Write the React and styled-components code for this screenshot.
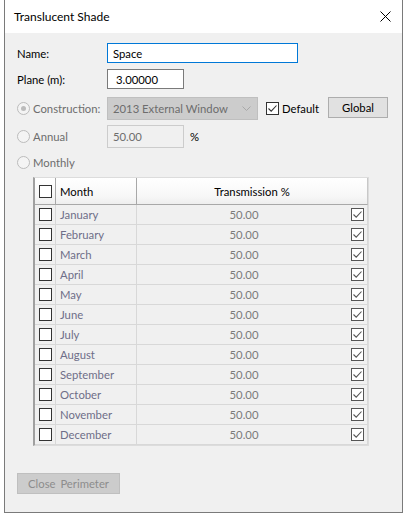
import React from 'react';
import styled, { createGlobalStyle } from 'styled-components';

const GlobalStyle = createGlobalStyle`
    body {
        margin: 0;
        background: #fff;
        font-family: Lato, "Noto Sans", sans-serif;
        font-size: 11.3px;
        color: #000;
    }
`;

const Window = styled.div`
    box-sizing: border-box;
    width: 399px;
    height: 513px;
    margin-left: 4px;
    border: 1px solid #7a7a7a;
    border-top: none;
    background: #f0f0f0;
    display: flex;
    flex-direction: column;
`;

const TitleBar = styled.div`
    height: 33px;
    flex: none;
    background: #fff;
    display: flex;
    align-items: center;
    justify-content: space-between;
    padding: 0 11px 0 9px;
    font-size: 12px;
`;

const Body = styled.div`
    padding: 10px 0 0 12px;
    display: flex;
    flex-direction: column;
`;

const Row = styled.div`
    display: flex;
    align-items: center;
    height: ${p => p.h || 20}px;
    margin-top: ${p => p.mt || 0}px;
`;

const Label = styled.div`
    width: 90px;
    flex: none;
    display: flex;
    align-items: center;
    color: ${p => (p.disabled ? '#6d6d6d' : '#000')};
`;

const TextBox = styled.div`
    box-sizing: border-box;
    width: ${p => p.w}px;
    height: ${p => p.h || 20}px;
    border: 1px solid ${p => p.border || '#7a7a7a'};
    background: ${p => p.bg || '#fff'};
    color: ${p => p.color || '#000'};
    padding-left: ${p => p.pl || 5}px;
    display: flex;
    align-items: center;
`;

const Select = styled(TextBox)`
    justify-content: space-between;
    padding-right: 6px;
`;

const Radio = styled.span`
    box-sizing: border-box;
    width: 13px;
    height: 13px;
    border-radius: 50%;
    border: 1px solid #bcbcbc;
    background: #f4f4f4;
    margin-right: 3px;
    display: flex;
    align-items: center;
    justify-content: center;
    &::after {
        content: '';
        width: 5px;
        height: 5px;
        border-radius: 50%;
        background: ${p => (p.checked ? '#bcbcbc' : 'transparent')};
    }
`;

const Box = styled.span`
    box-sizing: border-box;
    width: 13px;
    height: 13px;
    flex: none;
    border: 1px solid ${p => p.border || '#333'};
    background: #fff;
    display: flex;
    align-items: center;
    justify-content: center;
    margin-right: ${p => p.mr || 0}px;
    margin-left: ${p => p.ml || 0}px;
`;

const Button = styled.div`
    box-sizing: border-box;
    width: ${p => p.w}px;
    height: 21px;
    background: ${p => (p.disabled ? '#cccccc' : '#e1e1e1')};
    border: 1px solid ${p => (p.disabled ? '#bfbfbf' : '#adadad')};
    color: ${p => (p.disabled ? '#8d8d8d' : '#000')};
    display: flex;
    align-items: center;
    justify-content: center;
    word-spacing: 2px;
`;

const Spacer = styled.div`
    flex: 1;
`;

const GlobalButton = styled(Button)`
    margin-right: 14px;
    align-self: flex-start;
`;

const CloseButton = styled(Button)`
    margin-top: 27px;
`;

const Unit = styled.span`
    margin-left: 6px;
`;

const Table = styled.div`
    box-sizing: border-box;
    width: 336px;
    margin: 7px 0 0 16px;
    border: 1px solid #dcdcdc;
    border-left: 2px solid #a0a0a0;
    display: grid;
    grid-template-columns: 21px 81px 1fr;
`;

const HeadCell = styled.div`
    box-sizing: border-box;
    height: 27px;
    background: linear-gradient(#ffffff, #f7f7f7 70%, #eeeeee);
    border-right: 1px solid #a8a8a8;
    border-bottom: 1px solid #a8a8a8;
    display: flex;
    align-items: center;
    justify-content: ${p => p.align || 'flex-start'};
    padding-left: ${p => p.pl || 0}px;
    &:nth-child(3) {
        border-right: 1px solid #c8c8c8;
    }
`;

const Cell = styled.div`
    box-sizing: border-box;
    height: 20px;
    border-right: 1px solid #d8d8d8;
    border-bottom: 1px solid #d8d8d8;
    display: flex;
    align-items: center;
    justify-content: ${p => p.align || 'flex-start'};
    padding-left: ${p => p.pl || 0}px;
    color: ${p => p.color || '#000'};
`;

const Value = styled.span`
    flex: 1;
    text-align: center;
    color: #7a7a7a;
`;

const Check = ({ color = '#333' }) => (
    <svg width="11" height="11" viewBox="0 0 11 11">
        <path d="M1.5 5.5 L4.2 8.2 L9.5 2.5" fill="none" stroke={color} strokeWidth="1.1" />
    </svg>
);

const months = [
    'January', 'February', 'March', 'April', 'May', 'June',
    'July', 'August', 'September', 'October', 'November', 'December'
];

export default function App() {
    return (
        <>
            <GlobalStyle />
            <Window>
                <TitleBar>
                    <span>Translucent Shade</span>
                    <svg width="11" height="11" viewBox="0 0 11 11">
                        <path d="M0.5 0.5 L10.5 10.5 M10.5 0.5 L0.5 10.5" stroke="#000" strokeWidth="1" />
                    </svg>
                </TitleBar>
                <Body>
                    <Row>
                        <Label>Name:</Label>
                        <TextBox w={191} border="#0078d7">Space</TextBox>
                    </Row>
                    <Row mt={6}>
                        <Label>Plane (m):</Label>
                        <TextBox w={77} pl={8}>3.00000</TextBox>
                    </Row>
                    <Row mt={8} h={23}>
                        <Label disabled><Radio checked />Construction:</Label>
                        <Select w={151} h={23} bg="#cccccc" border="#bfbfbf" color="#6d6d6d">
                            2013 External Window
                            <svg width="9" height="5" viewBox="0 0 9 5">
                                <path d="M0.5 0.5 L4.5 4.5 L8.5 0.5" fill="none" stroke="#a8a8a8" />
                            </svg>
                        </Select>
                        <Box ml={8} mr={3}><Check /></Box>
                        <span>Default</span>
                        <Spacer />
                        <GlobalButton w={60}>Global</GlobalButton>
                    </Row>
                    <Row mt={5} h={23}>
                        <Label disabled><Radio />Annual</Label>
                        <TextBox w={77} h={23} bg="#f0f0f0" border="#cccccc" color="#6d6d6d">50.00</TextBox>
                        <Unit>%</Unit>
                    </Row>
                    <Row mt={6} h={16}>
                        <Label disabled><Radio />Monthly</Label>
                    </Row>
                    <Table>
                        <HeadCell align="center"><Box /></HeadCell>
                        <HeadCell pl={4}>Month</HeadCell>
                        <HeadCell align="center">Transmission %</HeadCell>
                        {months.map(m => (
                            <React.Fragment key={m}>
                                <Cell align="center"><Box /></Cell>
                                <Cell pl={4} color="#6e6e88">{m}</Cell>
                                <Cell>
                                    <Value>50.00</Value>
                                    <Box border="#555" mr={3}><Check color="#555" /></Box>
                                </Cell>
                            </React.Fragment>
                        ))}
                    </Table>
                    <CloseButton w={103} disabled>Close Perimeter</CloseButton>
                </Body>
            </Window>
        </>
    );
}
